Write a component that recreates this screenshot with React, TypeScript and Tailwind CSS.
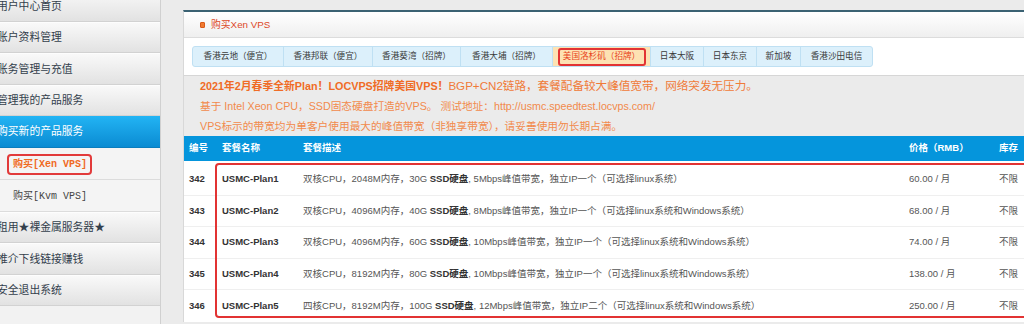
import React from "react";

const SANS = { fontFamily: '"Liberation Sans", "Noto Sans CJK SC", sans-serif' };
const MONO = { fontFamily: '"Liberation Mono", "Noto Sans CJK SC", monospace' };

function NavRow({ label }: { label: string }) {
  return (
    <div className="h-[31.5px] flex items-center bg-linear-to-b from-[#f9f9f9] to-[#e2e2e2] border-b border-[#d2d2d2] border-t border-t-[#fdfdfd] overflow-hidden">
      <span className="ml-[-3px] text-[10.8px] text-[#33404c] whitespace-nowrap">{label}</span>
    </div>
  );
}

const tabs: { label: string; w: number; active?: boolean }[] = [
  { label: "香港云地（便宜）", w: 90 },
  { label: "香港邦联（便宜）", w: 89 },
  { label: "香港葵湾（招牌）", w: 88 },
  { label: "香港大埔（招牌）", w: 92 },
  { label: "美国洛杉矶（招牌）", w: 98, active: true },
  { label: "日本大阪", w: 53 },
  { label: "日本东京", w: 53 },
  { label: "新加坡", w: 44 },
  { label: "香港沙田电信", w: 72 },
];

const plans = [
  { id: "342", name: "USMC-Plan1", core: "双核", ram: "2048M", disk: "30G", bw: "5Mbps", ip: "一个", os: "可选择linux系统", price: "60.00 / 月" },
  { id: "343", name: "USMC-Plan2", core: "双核", ram: "4096M", disk: "40G", bw: "8Mbps", ip: "一个", os: "可选择linux系统和Windows系统", price: "68.00 / 月" },
  { id: "344", name: "USMC-Plan3", core: "双核", ram: "4096M", disk: "60G", bw: "10Mbps", ip: "一个", os: "可选择linux系统和Windows系统", price: "74.00 / 月" },
  { id: "345", name: "USMC-Plan4", core: "双核", ram: "8192M", disk: "80G", bw: "10Mbps", ip: "一个", os: "可选择linux系统和Windows系统", price: "138.00 / 月" },
  { id: "346", name: "USMC-Plan5", core: "四核", ram: "8192M", disk: "100G", bw: "12Mbps", ip: "二个", os: "可选择linux系统和Windows系统", price: "250.00 / 月" },
];

export default function App() {
  return (
    <div className="w-[1024px] h-[324px] overflow-hidden bg-[#ebebeb] flex" style={SANS}>
      {/* Sidebar */}
      <div className="w-[161px] shrink-0 border-r border-[#d0d0d0] mt-[-10px] bg-[#f2f2f2]">
        <NavRow label="用户中心首页" />
        <NavRow label="账户资料管理" />
        <NavRow label="账务管理与充值" />
        <NavRow label="管理我的产品服务" />
        <div className="h-[31.5px] flex items-center bg-linear-to-b from-[#22b4f4] to-[#0a8bd2] border-b border-[#0a7dbd] overflow-hidden">
          <span className="ml-[-3px] text-[10.8px] text-white whitespace-nowrap">购买新的产品服务</span>
        </div>
        <div className="h-[32px] flex items-center bg-[#f4f4f4] border-b border-[#dcdcdc] pl-[7px] pt-[2px]">
          <span
            className="border-2 border-[#e23a3a] rounded-[4px] px-[4px] h-[21px] w-[85px] flex items-center text-[10px] font-bold text-[#f06a1e] whitespace-nowrap"
            style={MONO}
          >
            购买[Xen VPS]
          </span>
        </div>
        <div className="h-[32px] flex items-center bg-[#f4f4f4] border-b border-[#dcdcdc] pl-[13px] pt-[2px]">
          <span className="text-[10px] text-[#444] whitespace-nowrap" style={MONO}>购买[Kvm VPS]</span>
        </div>
        <NavRow label="租用★裸金属服务器★" />
        <NavRow label="推介下线链接赚钱" />
        <NavRow label="安全退出系统" />
      </div>

      {/* Main */}
      <div className="flex-1 pl-[22px] pt-[10px] min-w-0">
        <div className="bg-white border-t-2 border-[#3b6273] border-l border-l-[#d8d8d8] flex flex-col">
          {/* Header */}
          <div className="h-[26px] bg-linear-to-b from-[#ffffff] to-[#efefef] border-b border-[#dcdcdc] flex items-center pl-[16px] gap-[6px]">
            <span className="w-[5px] h-[6px] bg-[#f07a30] border border-[#d85a1a] rounded-[1px]" />
            <span className="text-[9.8px] text-[#dd4a2a] pt-[1px]">购买Xen VPS</span>
          </div>
          {/* Tabs */}
          <div className="h-[38px] flex items-center pl-[8px] border-b border-[#d6d6d6]">
            <div className="flex h-[21px] border border-[#bfe0f3] rounded-[3px] bg-[#dcf0fb] overflow-hidden">
              {tabs.map((t, i) => (
                <div
                  key={t.label}
                  className={
                    "flex items-center justify-center text-[8.6px] whitespace-nowrap " +
                    (i > 0 ? "border-l border-[#bfe0f3] " : "") +
                    (t.active ? "bg-[#fde2b3] text-[#e8431c]" : "text-[#3a3a3a]")
                  }
                  style={{ width: t.w }}
                >
                  {t.active ? (
                    <span className="border-2 border-[#e23333] rounded-[3px] h-[18px] w-[88px] flex items-center justify-center">
                      {t.label}
                    </span>
                  ) : (
                    t.label
                  )}
                </div>
              ))}
            </div>
          </div>
          {/* Notice */}
          <div className="bg-[#ebebeb] pl-[16px] text-[10.7px] leading-[20px] text-[#f28a4c] whitespace-nowrap">
            <div className="flex items-baseline">
              <span className="font-bold text-[#f06c26] text-[10.8px]">2021年2月春季全新Plan！LOCVPS招牌美国VPS！</span>
              <span className="text-[#f07a38] text-[11.6px]">BGP+CN2链路，套餐配备较大峰值宽带，网络突发无压力。</span>
            </div>
            <div>基于 Intel Xeon CPU，SSD固态硬盘打造的VPS。 测试地址：http://usmc.speedtest.locvps.com/</div>
            <div>VPS标示的带宽均为单客户使用最大的峰值带宽（非独享带宽），请妥善使用勿长期占满。</div>
          </div>
          {/* Table */}
          <div className="grid grid-cols-[38px_81px_606px_90px_1fr] h-[25px] items-center bg-[#0595dc] text-white font-bold text-[9.5px]">
            <div className="pl-[5px]">编号</div>
            <div>套餐名称</div>
            <div>套餐描述</div>
            <div>价格（RMB）</div>
            <div>库存</div>
          </div>
          <div className="relative bg-white pt-[3px]">
            {plans.map((p, i) => (
              <div
                key={p.id}
                className={
                  "grid grid-cols-[38px_81px_606px_90px_1fr] h-[31.5px] items-center text-[9.5px] text-[#555] whitespace-nowrap " +
                  (i < plans.length - 1 ? "border-b border-[#efefef]" : "")
                }
              >
                <div className="pl-[5px] font-bold text-[#333]">{p.id}</div>
                <div className="font-bold text-[#333]">{p.name}</div>
                <div>
                  {p.core}CPU，{p.ram}内存，{p.disk} <b className="text-[#333]">SSD硬盘</b>, {p.bw}峰值带宽，独立IP{p.ip}（{p.os}）
                </div>
                <div>{p.price}</div>
                <div>不限</div>
              </div>
            ))}
            <div className="absolute left-[31px] top-[2px] right-[-20px] h-[155px] border-2 border-[#e23333] rounded-[4px] pointer-events-none" />
          </div>
        </div>
      </div>
    </div>
  );
}
